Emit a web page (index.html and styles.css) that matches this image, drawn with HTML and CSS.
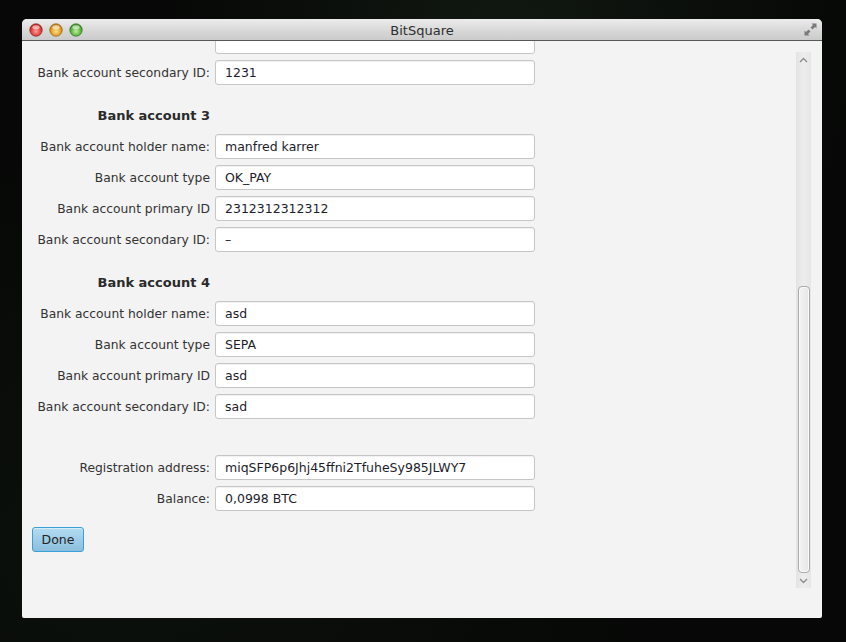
FILE: index.html
```html
<!DOCTYPE html>
<html>
<head>
<meta charset="utf-8">
<title>BitSquare</title>
<link rel="stylesheet" href="styles.css">
</head>
<body>
<div class="window">
  <div class="titlebar">
    <div class="lights">
      <svg class="light" width="14" height="14" viewBox="0 0 14 14"><defs><radialGradient id="r" cx="50%" cy="60%" r="60%"><stop offset="0" stop-color="#f7a09a"/><stop offset="0.6" stop-color="#e2463f"/><stop offset="1" stop-color="#b0201c"/></radialGradient></defs><circle cx="7" cy="7" r="6.2" fill="url(#r)" stroke="#8e2a26" stroke-width="0.8"/><ellipse cx="7" cy="4.2" rx="3.6" ry="2" fill="#fff" opacity="0.55"/></svg>
      <svg class="light" width="14" height="14" viewBox="0 0 14 14"><defs><radialGradient id="y" cx="50%" cy="60%" r="60%"><stop offset="0" stop-color="#fbe08a"/><stop offset="0.6" stop-color="#e6a52a"/><stop offset="1" stop-color="#b5780e"/></radialGradient></defs><circle cx="7" cy="7" r="6.2" fill="url(#y)" stroke="#94671a" stroke-width="0.8"/><ellipse cx="7" cy="4.2" rx="3.6" ry="2" fill="#fff" opacity="0.55"/></svg>
      <svg class="light" width="14" height="14" viewBox="0 0 14 14"><defs><radialGradient id="g" cx="50%" cy="60%" r="60%"><stop offset="0" stop-color="#c2ee9c"/><stop offset="0.6" stop-color="#62b845"/><stop offset="1" stop-color="#35861f"/></radialGradient></defs><circle cx="7" cy="7" r="6.2" fill="url(#g)" stroke="#3d7a2a" stroke-width="0.8"/><ellipse cx="7" cy="4.2" rx="3.6" ry="2" fill="#fff" opacity="0.55"/></svg>
    </div>
    <div class="title">BitSquare</div>
    <svg class="fullscreen" width="15" height="15" viewBox="0 0 15 15">
      <path d="M8.5 1.5 H13.5 V6.5 L12 5 L9.5 7.5 L7.5 5.5 L10 3 Z" fill="#7a7a7a"/>
      <path d="M6.5 13.5 H1.5 V8.5 L3 10 L5.5 7.5 L7.5 9.5 L5 12 Z" fill="#7a7a7a"/>
    </svg>
  </div>
  <div class="content">
    <div class="viewport">
      <div class="scroller">
        <div class="form">
          <div class="label"></div><div class="field"></div>

          <div class="label">Bank account secondary ID:</div><div class="field">1231</div>

          <div class="heading">Bank account 3</div><div></div>
          <div class="label">Bank account holder name:</div><div class="field">manfred karrer</div>
          <div class="label">Bank account type</div><div class="field">OK_PAY</div>
          <div class="label">Bank account primary ID</div><div class="field">2312312312312</div>
          <div class="label">Bank account secondary ID:</div><div class="field">–</div>

          <div class="heading">Bank account 4</div><div></div>
          <div class="label">Bank account holder name:</div><div class="field">asd</div>
          <div class="label">Bank account type</div><div class="field">SEPA</div>
          <div class="label">Bank account primary ID</div><div class="field">asd</div>
          <div class="label">Bank account secondary ID:</div><div class="field">sad</div>

          <div class="spacer"></div><div class="spacer"></div>
          <div class="label">Registration address:</div><div class="field">miqSFP6p6Jhj45ffni2TfuheSy985JLWY7</div>
          <div class="label">Balance:</div><div class="field">0,0998 BTC</div>
        </div>
        <button class="done">Done</button>
      </div>
    </div>
    <div class="scrollbar">
      <div class="arrow up"><svg width="9" height="6" viewBox="0 0 9 6"><path d="M1 5 L4.5 1.5 L8 5" fill="none" stroke="#8a8a8a" stroke-width="1.3"/></svg></div>
      <div class="track"><div class="thumb"></div></div>
      <div class="arrow down"><svg width="9" height="6" viewBox="0 0 9 6"><path d="M1 1 L4.5 4.5 L8 1" fill="none" stroke="#8a8a8a" stroke-width="1.3"/></svg></div>
    </div>
  </div>
</div>
</body>
</html>
```

FILE: styles.css
```css
html, body {
  margin: 0;
  padding: 0;
}
body {
  width: 846px;
  height: 642px;
  overflow: hidden;
  background:
    radial-gradient(ellipse at 60% 8%, #111811 0%, rgba(10,14,10,0) 50%),
    radial-gradient(ellipse at 15% 85%, #0c110c 0%, rgba(10,14,10,0) 55%),
    #060706;
  font-family: "DejaVu Sans", "Liberation Sans", sans-serif;
  font-size: 12px;
  color: #333;
}
.window {
  margin: 19px 0 0 22px;
  width: 800px;
  height: 599px;
  border-radius: 5px 5px 2px 2px;
  overflow: hidden;
  background: #f3f3f3;
  display: flex;
  flex-direction: column;
}
.titlebar {
  height: 21px;
  flex: none;
  border-bottom: 1px solid #575757;
  background: linear-gradient(#ececec, #d6d6d6 60%, #cbcbcb);
  display: flex;
  align-items: center;
  position: relative;
}
.lights {
  display: flex;
  gap: 6px;
  padding-left: 7px;
  padding-top: 1px;
}
.light {
  display: block;
}
.title {
  position: absolute;
  left: 0;
  right: 0;
  top: 1px;
  text-align: center;
  line-height: 22px;
  font-size: 13px;
  color: #2e2e2e;
}
.fullscreen {
  position: absolute;
  right: 4px;
  top: 3px;
}
.content {
  flex: 1;
  display: flex;
  min-height: 0;
}
.viewport {
  flex: 1;
  overflow: hidden;
}
.scroller {
  margin-top: -12px;
}
.form {
  display: grid;
  grid-template-columns: 188px 320px;
  column-gap: 5px;
  row-gap: 6px;
}
.label {
  text-align: right;
  align-self: center;
  font-size: 12.3px;
  white-space: nowrap;
  color: #333;
}
.field {
  height: 23px;
  border: 1px solid #c6c6c6;
  border-radius: 3px;
  background: #fff;
  box-shadow: inset 0 1px 1px rgba(0,0,0,0.06);
  padding: 0 9px;
  line-height: 23px;
  font-size: 12.5px;
  color: #1d1d2b;
  white-space: nowrap;
  overflow: hidden;
}
.heading {
  height: 37px;
  display: flex;
  align-items: flex-end;
  justify-content: flex-end;
  padding-bottom: 4px;
  box-sizing: border-box;
  font-weight: bold;
  font-size: 13px;
  line-height: 16px;
  color: #2a2a2a;
}
.spacer {
  height: 24px;
}
.done {
  display: block;
  margin: 16px 0 0 10px;
  width: 52px;
  height: 25px;
  padding: 0;
  border: 1px solid #3a9fd6;
  border-radius: 3px;
  background: linear-gradient(#b4dcf1, #9ccbe6 55%, #8cbfdd);
  box-shadow: inset 0 1px 0 rgba(255,255,255,0.45);
  font-family: "DejaVu Sans", "Liberation Sans", sans-serif;
  font-size: 12.5px;
  color: #222;
}
.scrollbar {
  flex: none;
  width: 15px;
  margin: 11px 11px 30px 0;
  background: linear-gradient(90deg, #e3e3e3, #ededed 50%, #e6e6e6);
  display: flex;
  flex-direction: column;
}
.arrow {
  height: 15px;
  flex: none;
  display: flex;
  align-items: center;
  justify-content: center;
}
.track {
  flex: 1;
  display: flex;
  flex-direction: column;
}
.thumb {
  margin: 219px 1px 0 2px;
  height: 285px;
  border: 1px solid #a9a9a9;
  border-radius: 4px;
  background: linear-gradient(90deg, #f4f4f4, #e6e6e6);
  box-shadow: inset 0 0 0 1px #fbfbfb;
}
```
